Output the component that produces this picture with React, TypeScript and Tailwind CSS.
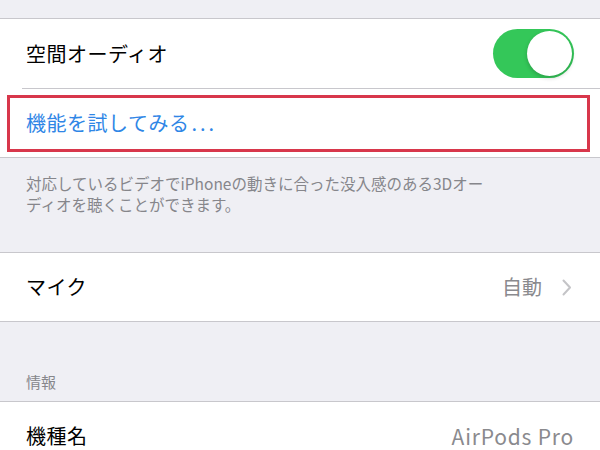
import React from "react";

const font = { fontFamily: '"Noto Sans CJK JP", "Noto Sans", sans-serif' };

export default function App() {
  return (
    <div className="w-[600px] h-[450px] overflow-hidden bg-[#efeff4]" style={font}>
      <div className="h-[18px]" />
      <div className="bg-white border-t border-b border-[#c8c7cc]">
        <div className="h-[69px] flex items-center justify-between pl-[26px] pr-[26px]">
          <span className="text-[20px] tracking-[0.5px] text-black leading-none">空間オーディオ</span>
          <div className="w-[81px] h-[49px] rounded-full bg-[#34c759] flex items-center justify-end pr-[2px]">
            <div className="w-[45px] h-[45px] rounded-full bg-white shadow-[0_2px_4px_rgba(0,0,0,0.2)]" />
          </div>
        </div>
        <div className="ml-[22px] h-px bg-[#c8c7cc]" />
        <div className="relative h-[68px] flex items-center pl-[26px]">
          <span className="text-[20px] tracking-[0.5px] text-[#2f86e6] leading-none">
            機能を試してみる<span className="ml-[2px] tracking-[3px]">...</span>
          </span>
          <div className="absolute left-[7px] top-[6px] w-[583px] h-[57px] border-[3px] border-[#d8374b]" />
        </div>
      </div>
      <div className="h-[94px] pl-[26px] pt-[15px]">
        <p className="w-[462px] text-[15.5px] leading-[21px] text-[#86868b]">
          対応しているビデオでiPhoneの動きに合った没入感のある3Dオーディオを聴くことができます。
        </p>
      </div>
      <div className="bg-white border-t border-b border-[#c8c7cc]">
        <div className="h-[68px] flex items-center justify-between pl-[26px] pr-[28px]">
          <span className="text-[20px] tracking-[0.5px] text-black leading-none">マイク</span>
          <div className="flex items-center gap-[20px]">
            <span className="text-[20px] text-[#8a8a8e] leading-none">自動</span>
            <svg width="10" height="17" viewBox="0 0 10 17">
              <path d="M1.5 1.5 L8 8.5 L1.5 15.5" fill="none" stroke="#c4c4c7" strokeWidth="2" strokeLinecap="round" strokeLinejoin="round" />
            </svg>
          </div>
        </div>
      </div>
      <div className="h-[79px] flex items-end pl-[26px] pb-[12px]">
        <span className="text-[15px] text-[#86868b] leading-none">情報</span>
      </div>
      <div className="bg-white border-t border-[#c8c7cc]">
        <div className="h-[68px] flex items-center justify-between pl-[26px] pr-[26px]">
          <span className="text-[20px] tracking-[0.5px] text-black leading-none">機種名</span>
          <span className="text-[21px] tracking-[0.8px] text-[#8a8a8e] leading-none">AirPods Pro</span>
        </div>
      </div>
    </div>
  );
}
